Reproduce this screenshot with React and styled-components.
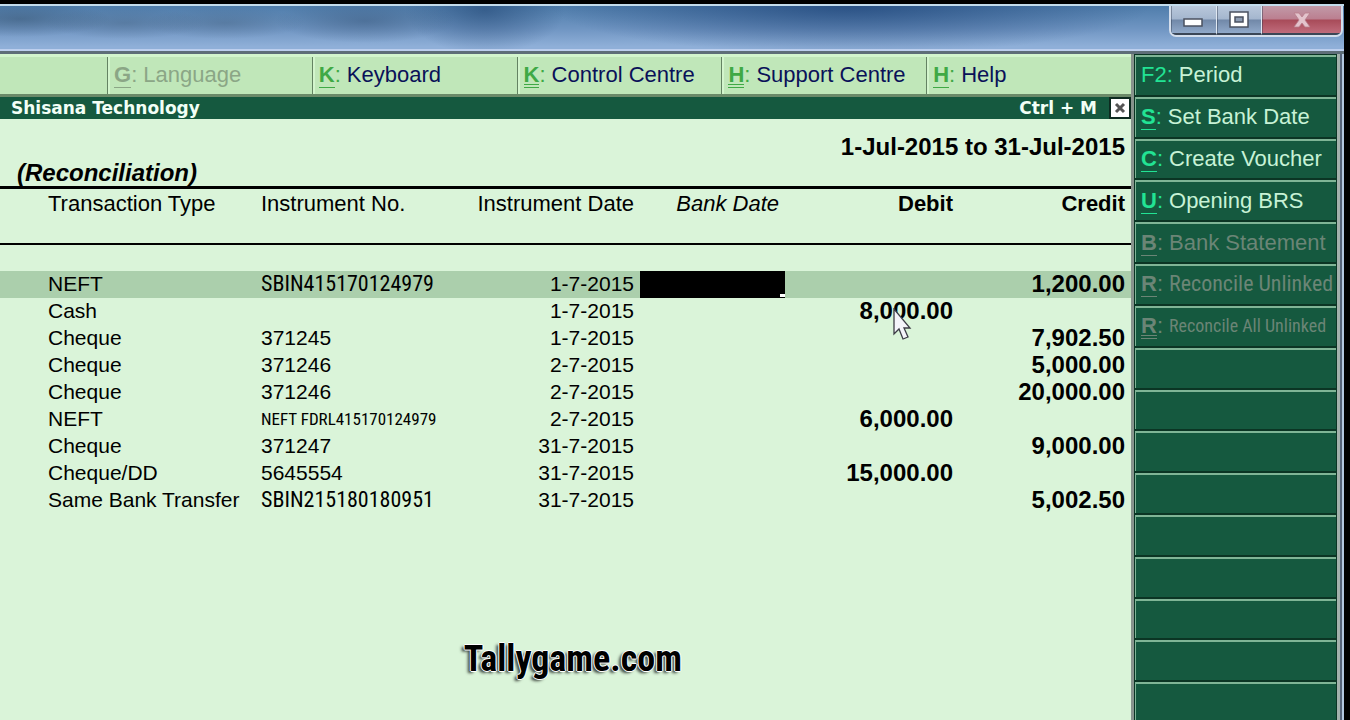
import React from 'react';

import styled, { createGlobalStyle } from 'styled-components';

const sans = '"Liberation Sans", Arial, sans-serif';
const narrow = '"Roboto Condensed", "Arial Narrow", "Liberation Sans", sans-serif';

const color = {
  page: '#daf4d9',
  bar: '#c0e7b9',
  barLight: '#d3f5cd',
  green: '#15593f',
  greenLight: '#7fb596',
  greenDark: '#0b3524',
  key: '#3fa945',
  keyBright: '#22e394',
  navy: '#0a1158',
  muted: '#8ba686',
  mutedDark: '#6b8576'
};

const menu = [
  { keyName: 'G', label: 'Language', lines: 1, disabled: true },
  { keyName: 'K', label: 'Keyboard', lines: 1 },
  { keyName: 'K', label: 'Control Centre', lines: 2 },
  { keyName: 'H', label: 'Support Centre', lines: 2 },
  { keyName: 'H', label: 'Help', lines: 1 }
];

const actions = [
  { keyName: 'F2', label: 'Period', lines: 0 },
  { keyName: 'S', label: 'Set Bank Date', lines: 1 },
  { keyName: 'C', label: 'Create Voucher', lines: 1 },
  { keyName: 'U', label: 'Opening BRS', lines: 1 },
  { keyName: 'B', label: 'Bank Statement', lines: 1, disabled: true },
  { keyName: 'R', label: 'Reconcile Unlinked', lines: 1, disabled: true, fit: 'medium' },
  { keyName: 'R', label: 'Reconcile All Unlinked', lines: 2, disabled: true, fit: 'small' }
];

const emptySlots = Array.from({ length: 9 }, (_, i) => i);

const rows = [
  { type: 'NEFT', no: 'SBIN415170124979', fit: 'medium', date: '1-7-2015', credit: '1,200.00', active: true },
  { type: 'Cash', no: '', date: '1-7-2015', debit: '8,000.00' },
  { type: 'Cheque', no: '371245', date: '1-7-2015', credit: '7,902.50' },
  { type: 'Cheque', no: '371246', date: '2-7-2015', credit: '5,000.00' },
  { type: 'Cheque', no: '371246', date: '2-7-2015', credit: '20,000.00' },
  { type: 'NEFT', no: 'NEFT FDRL415170124979', fit: 'small', date: '2-7-2015', debit: '6,000.00' },
  { type: 'Cheque', no: '371247', date: '31-7-2015', credit: '9,000.00' },
  { type: 'Cheque/DD', no: '5645554', date: '31-7-2015', debit: '15,000.00' },
  { type: 'Same Bank Transfer', no: 'SBIN215180180951', fit: 'medium', date: '31-7-2015', credit: '5,002.50' }
];

const GlobalStyle = createGlobalStyle`
  * {
    box-sizing: border-box;
  }

  body {
    margin: 0;
    background: #000;
    font-family: ${sans};
  }

  button {
    font: inherit;
    text-align: left;
    cursor: default;
  }
`;

const Screen = styled.div`
  position: relative;
  display: flex;
  flex-direction: column;
  height: 100vh;
  padding: 4px 6px 0 0;
  overflow: hidden;
  background: #000;
`;

const TitleBar = styled.header`
  display: flex;
  justify-content: flex-end;
  align-items: flex-start;
  flex: 0 0 50px;
  border-top: 2px solid #c3dcec;
  border-bottom: 3px solid #5e6e78;
  box-shadow: inset 0 -2px 0 #bdcfee;
  background:
    radial-gradient(ellipse 90px 18px at 20px 13px, rgba(52, 80, 108, 0.5), transparent),
    radial-gradient(ellipse 80px 16px at 125px 17px, rgba(66, 94, 124, 0.4), transparent),
    radial-gradient(ellipse 80px 16px at 225px 17px, rgba(66, 94, 124, 0.4), transparent),
    radial-gradient(ellipse 90px 22px at 365px 15px, rgba(56, 86, 122, 0.5), transparent),
    radial-gradient(ellipse 80px 44px at 485px 4px, rgba(30, 66, 112, 0.55), transparent),
    radial-gradient(ellipse 300px 48px at 850px 0, rgba(22, 58, 112, 0.65), transparent),
    linear-gradient(#4f7dab, #6f95c2 50%, #8fafd8 90%);
`;

const WindowButtons = styled.div`
  display: flex;
  width: 174px;
  height: 31px;
  margin-right: 1px;
  border: 2px solid #d4deec;
  border-top: 0;
  border-radius: 0 0 7px 7px;
  overflow: hidden;
`;

const WindowButton = styled.button`
  display: flex;
  flex: ${props => props.$close ? '0 0 79px' : '1'};
  justify-content: center;
  align-items: center;
  padding: 0;
  border: 0;
  border-right: ${props => props.$close ? '0' : '1px solid #e0e8f2'};
  border-bottom: 2px solid #3b4656;
  box-shadow: inset 1px 0 0 rgba(40, 50, 70, 0.4);
  background: ${props => props.$close
    ? 'linear-gradient(#c29aa8, #bb7f90 48%, #a84b59 52%, #c06c7c)'
    : 'linear-gradient(#b9c8db, #a4b6ce 48%, #7188a8 52%, #91a9c9)'};
`;

const Client = styled.div`
  display: flex;
  flex: 1;
  min-height: 0;
`;

const Main = styled.main`
  position: relative;
  display: flex;
  flex: 1;
  flex-direction: column;
  min-width: 0;
  background: ${color.page};
`;

const MenuBar = styled.nav`
  display: flex;
  height: 43px;
  border-top: 3px solid ${color.barLight};
  border-bottom: 3px solid #6b8a69;
  background: ${color.bar};
`;

const MenuLead = styled.div`
  flex: 0 0 107px;
`;

const MenuButton = styled.button`
  display: flex;
  flex: 1;
  align-items: center;
  padding: 0 6px 1px;
  border: 0;
  border-left: 1px solid #648363;
  box-shadow: inset 2px 0 0 ${color.barLight};
  background: none;
  color: ${props => props.disabled ? color.muted : color.navy};
  font-size: 22px;
  line-height: 26px;
  white-space: nowrap;
`;

const underline = lines => ['0', '1px solid', '4px double'][lines];

const Shortcut = styled.span`
  flex: none;
  margin-right: 6px;
  color: ${props => props.$color};
`;

const ShortcutKey = styled.span`
  display: inline-block;
  height: 26px;
  border-bottom: ${props => underline(props.$lines)};
  font-weight: ${props => props.$lines ? 'bold' : 'normal'};
`;

const TitleStrip = styled.div`
  display: flex;
  align-items: center;
  height: 22px;
  padding-left: 11px;
  background: ${color.green};
  color: #f2fff6;
  font-family: "DejaVu Sans", Verdana, sans-serif;
  font-size: 17px;
  font-weight: bold;
`;

const Company = styled.span`
  flex: 1;
`;

const CloseButton = styled.button`
  display: flex;
  justify-content: center;
  align-items: center;
  width: 22px;
  height: 22px;
  margin-left: 12px;
  padding: 0;
  border: 2px solid #0d2b20;
  background: #fff;
`;

const Heading = styled.div`
  display: flex;
  flex-direction: column;
  height: 70px;
  padding: 15px 6px 0 17px;
  border-bottom: 3px solid #000;
  font-size: 24px;
  font-weight: bold;
  line-height: 26px;
`;

const Period = styled.span`
  align-self: flex-end;
`;

const Report = styled.h1`
  margin: 0;
  font-size: 24px;
  font-style: italic;
`;

const Table = styled.table`
  width: 100%;
  border-collapse: collapse;
  table-layout: fixed;
  font-size: 21px;
  line-height: 24px;
`;

const Th = styled.th`
  width: ${props => props.$width};
  height: 55px;
  padding: 3px 6px 0 ${props => props.$indent || 0};
  border-bottom: 2px solid #000;
  font-size: 22px;
  font-style: ${props => props.$italic ? 'italic' : 'normal'};
  font-weight: ${props => props.$strong ? 'bold' : 'normal'};
  text-align: ${props => props.$align || 'left'};
  vertical-align: top;
`;

const Spacer = styled.tr`
  height: 27px;
`;

const Row = styled.tr`
  background: ${props => props.$active ? '#abcfac' : 'none'};
`;

const Td = styled.td`
  height: 27px;
  padding: 0 6px 1px ${props => props.$indent || 0};
  text-align: ${props => props.$align || 'left'};
  vertical-align: middle;
  white-space: nowrap;
`;

const Amount = styled(Td)`
  font-size: 24px;
  font-weight: bold;
  text-align: right;
`;

const InstrumentNo = styled.span`
  display: block;
  font-family: ${props => props.$fit ? narrow : sans};
  font-size: ${props => props.$fit === 'small' ? '17px' : props.$fit ? '22px' : '21px'};
`;

const EntryCell = styled.td`
  position: relative;
  padding: 0;

  &::after {
    content: '';
    position: absolute;
    right: 0;
    bottom: 1px;
    width: 5px;
    height: 3px;
    background: #fff;
  }
`;

const Entry = styled.input`
  display: block;
  width: 100%;
  height: 27px;
  padding: 0 6px;
  border: 0;
  outline: 0;
  background: #000;
  color: #fff;
  font: inherit;
`;

const Watermark = styled.div`
  position: absolute;
  bottom: 37px;
  left: 41%;
  color: #000;
  font-family: "Roboto Condensed", Roboto, sans-serif;
  font-size: 36px;
  font-weight: bold;
  line-height: 48px;
  text-shadow: 1px 0 #fff, -1px 0 #fff, 0 1px #fff, 0 -1px #fff, -3px 2px 3px rgba(0, 0, 0, 0.7);
`;

const Pointer = styled.svg`
  position: absolute;
  top: 308px;
  left: 892px;
`;

const Side = styled.aside`
  display: grid;
  grid-template-rows: repeat(16, minmax(0, 1fr));
  grid-template-columns: minmax(0, 1fr);
  flex: 0 0 213px;
  height: calc(100% + 4px);
  padding: 1px 8px 0 1px;
  border-left: 3px solid #87938c;
  box-shadow: inset -2px 0 0 #b4c8e0, inset -4px 0 0 #56647a, inset -7px 0 0 #a3b1ac;
  background: ${color.greenDark};
`;

const SideButton = styled.button`
  display: flex;
  align-items: center;
  margin-bottom: 2px;
  padding: 0 0 1px 5px;
  border: 0;
  border-top: 2px solid ${color.greenLight};
  border-left: 1px solid ${color.greenLight};
  background: ${color.green};
  color: ${props => props.disabled ? color.mutedDark : '#c7f2d6'};
  font-size: 22px;
  line-height: 26px;
  white-space: nowrap;
`;

const SideLabel = styled.span`
  font-family: ${props => props.$fit ? narrow : sans};
  font-size: ${props => props.$fit === 'small' ? '18px' : '22px'};
`;

const Hotkey = ({ name, lines, tint }) =>
  <Shortcut $color={tint}>
    <ShortcutKey $lines={lines}>{name}</ShortcutKey>:
  </Shortcut>;

const WindowControls = () =>
  <WindowButtons>
    <WindowButton aria-label="Minimize">
      <svg width="20" height="14"><rect x="1" y="6" width="18" height="7" fill="#fff" stroke="#4b5260" strokeWidth="1.5" /></svg>
    </WindowButton>
    <WindowButton aria-label="Maximize">
      <svg width="20" height="17">
        <rect x="1" y="1" width="18" height="15" fill="#fff" stroke="#4b5260" strokeWidth="1.5" />
        <rect x="6" y="6" width="8" height="5" fill="#8e9db3" stroke="#4b5260" strokeWidth="1.5" />
      </svg>
    </WindowButton>
    <WindowButton $close aria-label="Close window">
      <svg width="18" height="16"><path d="M1 1h5l3 4 3-4h5l-5 7 5 7h-5l-3-4-3 4H1l5-7z" fill="#e3c3cc" stroke="#b77e8b" strokeWidth="0.8" /></svg>
    </WindowButton>
  </WindowButtons>;

const Ledger = () =>
  <Table>
    <thead>
      <tr>
        <Th $width="261px" $indent="48px">Transaction Type</Th>
        <Th $width="189px">Instrument No.</Th>
        <Th $width="190px" $align="right">Instrument Date</Th>
        <Th $width="145px" $align="right" $italic>Bank Date</Th>
        <Th $width="174px" $align="right" $strong>Debit</Th>
        <Th $align="right" $strong>Credit</Th>
      </tr>
    </thead>
    <tbody>
      <Spacer><td colSpan={6} /></Spacer>
      {rows.map((row, i) =>
        <Row key={i} $active={row.active}>
          <Td $indent="48px">{row.type}</Td>
          <Td><InstrumentNo $fit={row.fit}>{row.no}</InstrumentNo></Td>
          <Td $align="right">{row.date}</Td>
          {row.active ? <EntryCell><Entry aria-label="Bank Date" /></EntryCell> : <Td />}
          <Amount>{row.debit}</Amount>
          <Amount>{row.credit}</Amount>
        </Row>
      )}
    </tbody>
  </Table>;

const App = () =>
  <Screen>
    <GlobalStyle />
    <TitleBar>
      <WindowControls />
    </TitleBar>
    <Client>
      <Main>
        <MenuBar>
          <MenuLead />
          {menu.map(item =>
            <MenuButton key={item.label} disabled={item.disabled}>
              <Hotkey name={item.keyName} lines={item.lines} tint={item.disabled ? color.muted : color.key} />
              {item.label}
            </MenuButton>
          )}
        </MenuBar>
        <TitleStrip>
          <Company>Shisana Technology</Company>
          <span>Ctrl + M</span>
          <CloseButton aria-label="Close">
            <svg width="12" height="12"><path d="M2 2l8 8M10 2l-8 8" stroke="#555" strokeWidth="3" /></svg>
          </CloseButton>
        </TitleStrip>
        <Heading>
          <Period>1-Jul-2015 to 31-Jul-2015</Period>
          <Report>(Reconciliation)</Report>
        </Heading>
        <Ledger />
        <Watermark>Tallygame.com</Watermark>
      </Main>
      <Side>
        {actions.map(item =>
          <SideButton key={item.label} disabled={item.disabled}>
            <Hotkey name={item.keyName} lines={item.lines} tint={item.disabled ? color.mutedDark : color.keyBright} />
            <SideLabel $fit={item.fit}>{item.label}</SideLabel>
          </SideButton>
        )}
        {emptySlots.map(slot => <SideButton key={slot} aria-label="Unassigned" />)}
      </Side>
    </Client>
    <Pointer width="20" height="34" viewBox="0 0 20 34">
      <path d="M2 1v25l5-5 4 10 5-2-4-9h6z" fill="#f4f4fa" stroke="#3c3c46" strokeWidth="1.3" />
    </Pointer>
  </Screen>;

export default App;
